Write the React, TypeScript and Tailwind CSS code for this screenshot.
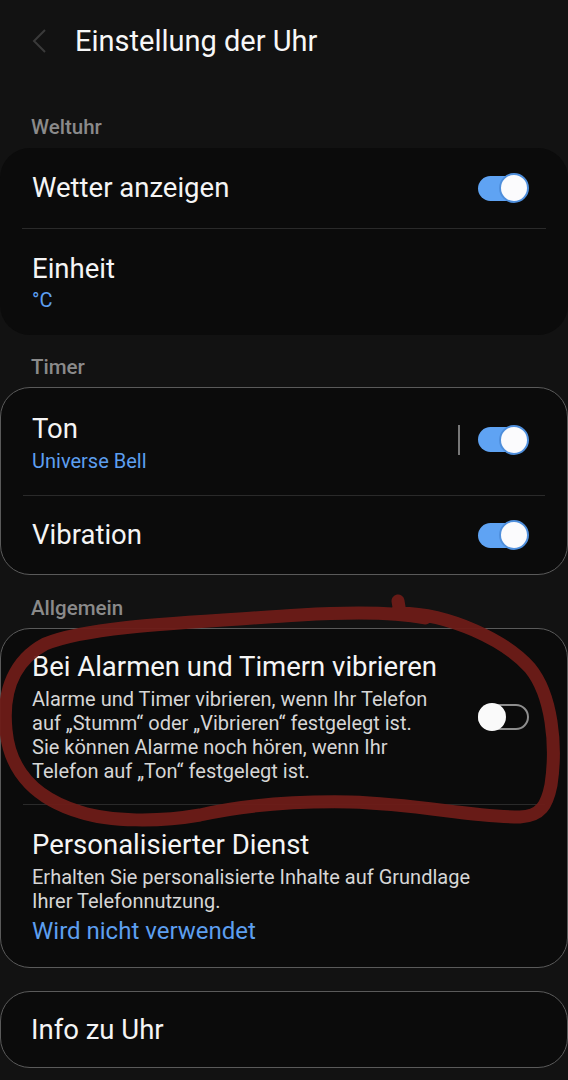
import React from "react";

function ToggleOn() {
  return (
    <div className="relative w-[52px] h-[30px] flex items-center shrink-0">
      <div className="w-[50px] h-[25px] rounded-full bg-[#5fa3f3]" />
      <div className="absolute right-[1px] top-0 w-[30px] h-[30px] rounded-full bg-[#fbfbfd] border-2 border-[#4f8fdc]" />
    </div>
  );
}

function ToggleOff() {
  return (
    <div className="relative w-[52px] h-[30px] flex items-center shrink-0">
      <div className="w-[51px] h-[26px] rounded-full border-2 border-[#8e8e8e]" />
      <div className="absolute left-0 top-[1px] w-[28px] h-[28px] rounded-full bg-[#fafafa]" />
    </div>
  );
}

function Divider() {
  return <div className="mx-[22px] h-px bg-[#2a2a2a]" />;
}

function SectionLabel({ text, className }: { text: string; className: string }) {
  return (
    <div className={`px-[31px] flex items-end ${className}`}>
      <span className="text-[20.5px] leading-[26px] font-medium text-[#8a8a8a]">{text}</span>
    </div>
  );
}

export default function App() {
  return (
    <div className="relative w-[568px] h-[1080px] overflow-hidden bg-[#121212] font-['Roboto','Noto_Sans',sans-serif] text-[#f5f5f5]">
      {/* Header */}
      <div className="h-[84px] flex items-center pb-[2px]">
        <svg width="75" height="84" viewBox="0 0 75 84" className="shrink-0">
          <polyline points="45,31 34,42 45,53" fill="none" stroke="#3a3a3a" strokeWidth="2" />
        </svg>
        <span className="text-[29px] leading-[34px] text-[#f7f7f7]">Einstellung der Uhr</span>
      </div>

      <SectionLabel text="Weltuhr" className="h-[64px] pb-[8px]" />

      {/* Card 1 */}
      <div className="rounded-[30px] bg-[#0b0b0b]">
        <div className="h-[80px] flex items-center justify-between pl-[32px] pr-[38px]">
          <span className="text-[27.5px] leading-[32px]">Wetter anzeigen</span>
          <ToggleOn />
        </div>
        <Divider />
        <div className="h-[106px] flex flex-col justify-center pl-[32px]">
          <span className="text-[27.5px] leading-[32px]">Einheit</span>
          <span className="text-[20px] leading-[24px] text-[#5d9ff0] mt-[3px]">°C</span>
        </div>
      </div>

      <SectionLabel text="Timer" className="h-[52px] pb-[7px]" />

      {/* Card 2 */}
      <div className="rounded-[30px] bg-[#0b0b0b] border border-[#5a5a5a]">
        <div className="h-[107px] flex items-center justify-between pl-[31px] pr-[37px]">
          <div className="flex flex-col pt-[2px]">
            <span className="text-[27.5px] leading-[32px]">Ton</span>
            <span className="text-[20px] leading-[24px] text-[#5d9ff0] mt-[4px]">Universe Bell</span>
          </div>
          <div className="flex items-center gap-[18px] -mt-[4px]">
            <div className="w-[2px] h-[30px] bg-[#777]" />
            <ToggleOn />
          </div>
        </div>
        <Divider />
        <div className="h-[78px] flex items-center justify-between pl-[31px] pr-[37px]">
          <span className="text-[27.5px] leading-[32px]">Vibration</span>
          <ToggleOn />
        </div>
      </div>

      <SectionLabel text="Allgemein" className="h-[53px] pb-[7px]" />

      {/* Card 3 */}
      <div className="rounded-[30px] bg-[#0b0b0b] border border-[#5a5a5a]">
        <div className="h-[175px] flex items-center justify-between pl-[31px] pr-[37px]">
          <div className="flex flex-col">
            <span className="text-[27.5px] leading-[32px]">Bei Alarmen und Timern vibrieren</span>
            <span className="text-[20px] leading-[24px] text-[#d6d6d6] mt-[4px]">
              Alarme und Timer vibrieren, wenn Ihr Telefon
              <br />
              auf „Stumm“ oder „Vibrieren“ festgelegt ist.
              <br />
              Sie können Alarme noch hören, wenn Ihr
              <br />
              Telefon auf „Ton“ festgelegt ist.
            </span>
          </div>
          <ToggleOff />
        </div>
        <Divider />
        <div className="h-[162px] flex flex-col justify-center pl-[31px] pt-[1px]">
          <span className="text-[27.5px] leading-[32px]">Personalisierter Dienst</span>
          <span className="text-[20px] leading-[24px] text-[#d6d6d6] mt-[4px]">
            Erhalten Sie personalisierte Inhalte auf Grundlage
            <br />
            Ihrer Telefonnutzung.
          </span>
          <span className="text-[24px] leading-[28px] text-[#5d9ff0] mt-[4px]">Wird nicht verwendet</span>
        </div>
      </div>

      <div className="h-[23px]" />

      {/* Card 4 */}
      <div className="rounded-[30px] bg-[#0b0b0b] border border-[#5a5a5a] h-[77px] flex items-center pl-[30px]">
        <span className="text-[27.5px] leading-[32px]">Info zu Uhr</span>
      </div>

      {/* Red scribble overlay */}
      <svg
        className="absolute inset-0 pointer-events-none"
        width="568"
        height="1080"
        viewBox="0 0 568 1080"
      >
        <path
          d="M 398 601 L 400 613 C 450 614, 505 640, 530 668 C 552 695, 557 745, 551 785 C 547 805, 541 816, 520 817 C 470 817, 420 804, 350 802 C 290 801, 240 806, 200 815 C 160 822, 110 822, 80 812 C 40 800, 10 775, 6 730 C 2 690, 15 660, 45 644 C 90 625, 200 622, 300 615 C 350 612, 395 612, 425 618"
          fill="none"
          stroke="#6e1c18"
          strokeWidth="13"
          strokeLinecap="round"
          strokeLinejoin="round"
          opacity="0.95"
        />
      </svg>
    </div>
  );
}
